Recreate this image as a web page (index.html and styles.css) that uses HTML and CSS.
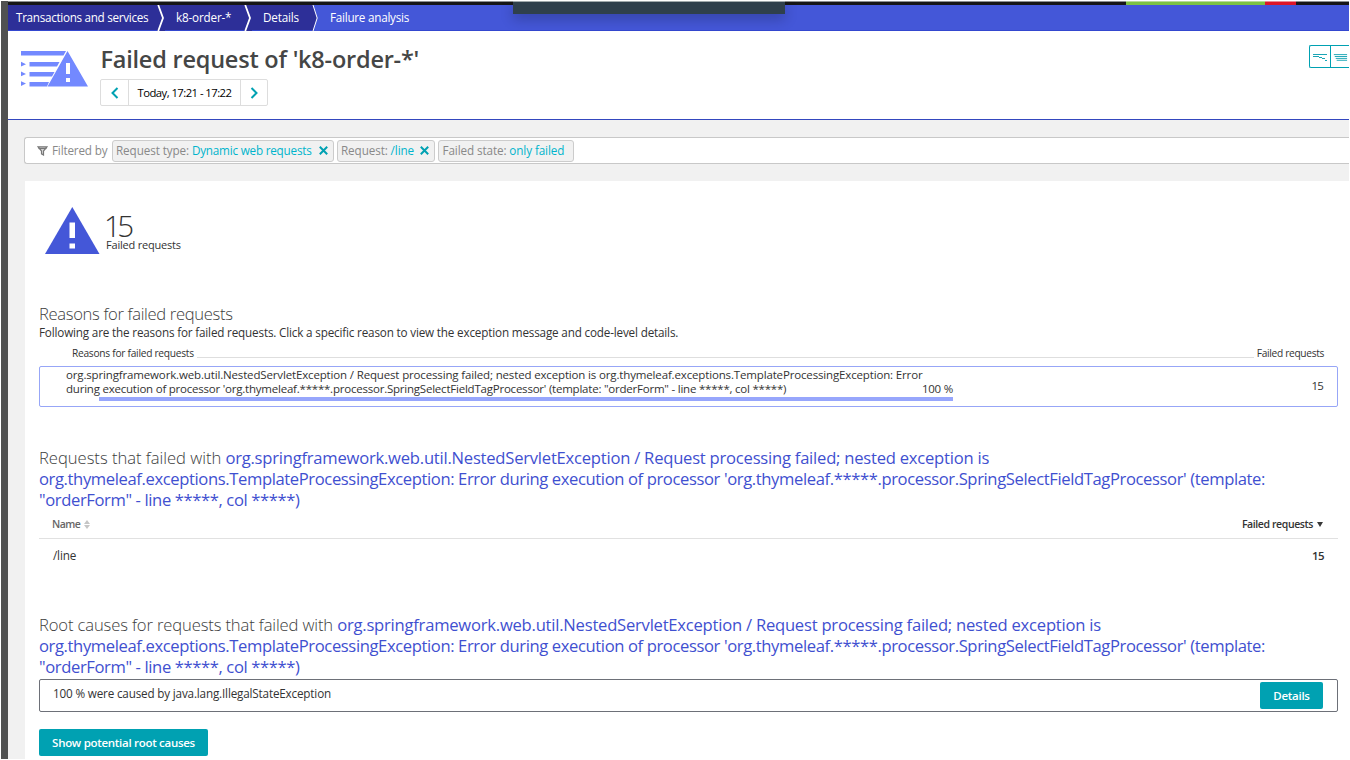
FILE: index.html
```html
<!DOCTYPE html>
<html lang="en">
<head>
<meta charset="utf-8">
<title>Failure analysis</title>
<link rel="stylesheet" href="styles.css">
</head>
<body>
<div class="window">
  <div class="topbar"><i class="dark-a"></i><i class="green"></i><i class="red"></i><i class="dark-b"></i></div>
  <div class="overlay"></div>

  <nav class="crumbs">
    <span class="crumb c1">Transactions and services</span>
    <svg class="sep" viewBox="0 0 8 26"><path d="M1.200 0L6 13L1.200 26"/></svg>
    <span class="crumb c2">k8-order-*</span>
    <svg class="sep" viewBox="0 0 8 26"><path d="M1.200 0L6 13L1.200 26"/></svg>
    <span class="crumb c3">Details</span>
    <svg class="sep last" viewBox="0 0 8 26"><path class="next" d="M1 0H8V26H1L5.200 13Z"/><path d="M1 0L5.200 13L1 26"/></svg>
    <span class="crumb c4">Failure analysis</span>
  </nav>

  <header class="header">
    <svg class="page-icon" width="68" height="38" viewBox="0 0 68 38">
      <path d="M0 1H45L42.500 5.500H0ZM8.500 12H38.500L36 16.500H8.500ZM8.500 22H33.500L31 26.500H8.500ZM8.500 32H28L26 36.500H8.500ZM0 11.800L5 14.200L0 16.600ZM0 21.500L5 23.900L0 26.300ZM0 31.200L5 33.600L0 36ZM46.500 1L67 36.500H26.500Z"/>
      <path class="mark" d="M45 13H49V24H45ZM45 28H49V32H45Z"/>
    </svg>
    <div class="heading">
      <h1>Failed request of 'k8-order-*'</h1>
      <div class="timeframe">
        <button class="step"><svg width="8" height="12" viewBox="0 0 8 12"><path d="M6.500 1L1.500 6L6.500 11"/></svg></button>
        <span class="range">Today, 17:21 - 17:22</span>
        <button class="step next-step"><svg width="8" height="12" viewBox="0 0 8 12"><path d="M1.500 1L6.500 6L1.500 11"/></svg></button>
      </div>
    </div>
    <div class="views">
      <svg width="20" height="21" viewBox="0 0 20 21"><path d="M3 8.500H17M3 10.500H9M9 11.500H12M12 12.500H15M15 14.500H17"/></svg>
      <svg width="19" height="21" viewBox="0 0 19 21"><path d="M3 8.500H17M4 10.500H17M5 12.500H17M6 14.500H17"/></svg>
    </div>
  </header>

  <main class="main">
    <div class="filter">
      <svg class="funnel" width="11" height="10" viewBox="0 0 11 10"><path d="M1 .8H10L6.500 5V9L4.500 7.800V5Z"/><path d="M1.500 2.500H9.500"/></svg>
      <span class="filter-label">Filtered by</span>
      <span class="chip type"><span>Request type: <b>Dynamic web requests</b></span><svg width="9" height="9" viewBox="0 0 9 9"><path d="M.8.8L8.200 8.200M8.200.8L.8 8.200"/></svg></span>
      <span class="chip request"><span>Request: <b>/line</b></span><svg width="9" height="9" viewBox="0 0 9 9"><path d="M.8.8L8.200 8.200M8.200.8L.8 8.200"/></svg></span>
      <span class="chip state"><span>Failed state: <b>only failed</b></span></span>
    </div>

    <section class="card">
      <div class="summary">
        <svg width="55" height="48" viewBox="0 0 55 48"><path d="M27.300 0L54.500 47H0Z"/><path class="mark" d="M24.500 15.500H30V31H24.500ZM24.500 36.500H30V41.500H24.500Z"/></svg>
        <div><div class="count">15</div><div class="caption">Failed requests</div></div>
      </div>

      <h2 class="reasons-title">Reasons for failed requests</h2>
      <p class="intro">Following are the reasons for failed requests. Click a specific reason to view the exception message and code-level details.</p>
      <div class="legend"><span class="legend-name">Reasons for failed requests</span><i></i><span class="legend-count">Failed requests</span></div>
      <div class="reason">
        <div class="reason-text">
          <div class="line-one">org.springframework.web.util.NestedServletException / Request processing failed; nested exception is org.thymeleaf.exceptions.TemplateProcessingException: Error</div>
          <div class="line-two"><span>during execution of processor 'org.thymeleaf.*****.processor.SpringSelectFieldTagProcessor' (template: "orderForm" - line *****, col *****)</span><span class="percent">100 %</span></div>
          <div class="bar"></div>
        </div>
        <span class="reason-count">15</span>
      </div>

      <h2 class="requests-title"><span class="lead-a">Requests that failed with</span> <b><span class="ex-a">org.springframework.web.util.NestedServletException / Request processing failed; nested exception is</span><br><span class="ex-b">org.thymeleaf.exceptions.TemplateProcessingException: Error during execution of processor 'org.thymeleaf.*****.processor.SpringSelectFieldTagProcessor' (template:</span><br><span class="ex-c">"orderForm" - line *****, col *****)</span></b></h2>
      <div class="thead">
        <span class="th-name">Name <svg width="6" height="9" viewBox="0 0 6 9"><path d="M3 0L6 4H0ZM3 9L0 5H6Z"/></svg></span>
        <span class="th-count">Failed requests <svg width="6" height="5" viewBox="0 0 6 5"><path d="M0 0H6L3 5Z"/></svg></span>
      </div>
      <div class="trow"><span>/line</span><strong>15</strong></div>

      <h2 class="causes-title"><span class="lead-b">Root causes for requests that failed with</span> <b><span class="ex-a">org.springframework.web.util.NestedServletException / Request processing failed; nested exception is</span><br><span class="ex-b">org.thymeleaf.exceptions.TemplateProcessingException: Error during execution of processor 'org.thymeleaf.*****.processor.SpringSelectFieldTagProcessor' (template:</span><br><span class="ex-c">"orderForm" - line *****, col *****)</span></b></h2>
      <div class="cause"><span class="cause-text">100 % were caused by java.lang.IllegalStateException</span><button class="btn details">Details</button></div>
      <button class="btn show">Show potential root causes</button>
    </section>
  </main>
</div>
</body>
</html>
```
FILE: styles.css
```css
* { box-sizing: border-box; }
body {
  margin: 0;
  background: #fff;
  color: #333;
  font: 11.700px "Open Sans", "Noto Sans", sans-serif;
  letter-spacing: -.17px;
  white-space: nowrap;
}
h1, h2, p { margin: 0; }
button { margin: 0; padding: 0; border: 0; background: none; font: inherit; }
svg { display: block; flex: none; }

.window {
  position: relative;
  width: 1348px;
  height: 758px;
  margin: 1px;
  border-left: 7px solid #505151;
  overflow: hidden;
}
.topbar { display: flex; height: 4px; margin-left: -7px; border-top: 1px solid #8c8f90; background: #161616; }
.topbar .dark-a { width: 1125px; }
.topbar .green { width: 139px; margin-top: -1px; background: #7cc243; border-top: 1px solid #b7dc95; }
.topbar .red { width: 31px; margin-top: -1px; background: #dd1528; border-top: 1px solid #eb8a91; }
.overlay {
  position: absolute;
  top: 0;
  left: 505px;
  width: 272px;
  height: 13px;
  border-top: 1px solid #a0a9ac;
  background: #2f404c;
  box-shadow: 0 5px 13px rgba(0, 0, 0, .23);
}

.crumbs { display: flex; height: 26px; background: #4457d8; border-bottom: 1px solid #3447cf; color: #fff; font-weight: 500; line-height: 25px; }
.crumb { flex: none; background: #2d2f98; }
.c1 { width: 149px; padding-left: 8px; letter-spacing: -.3px; }
.c2 { width: 79px; padding-left: 11px; }
.c3 { width: 60px; padding-left: 11px; }
.c4 { padding-left: 10px; background: none; letter-spacing: -.25px; }
.sep { width: 8px; height: 26px; background: #2d2f98; fill: none; stroke: #fff; stroke-width: 1.800; }
.sep .next { stroke: none; }
.sep.last { stroke-width: 1; }
.sep.last .next { fill: #4457d8; }

.header { display: flex; height: 89px; border-bottom: 1px solid #3447bf; background: #fff; }
.page-icon { margin: 19px 0 0 13px; fill: #7389ff; }
.mark, .page-icon .mark { fill: #fff; }
.heading { margin: 11px 0 0 11px; }
h1 { padding-left: .5px; color: #454646; font-size: 23.500px; font-weight: 600; line-height: 34px; letter-spacing: -.22px; }
.timeframe { display: flex; width: 168px; height: 27px; margin-top: 3px; border: 1px solid #ddd; border-radius: 2px; color: #000; }
.step { display: flex; width: 27px; align-items: center; justify-content: center; fill: none; stroke: #00a1b2; stroke-width: 2; }
.next-step { width: 26px; }
.range { width: 113px; border: solid #ddd; border-width: 0 1px; font-size: 11.300px; line-height: 25px; text-align: center; letter-spacing: -.55px; }
.views { display: flex; width: 40px; height: 23px; margin: 14px 0 0 auto; border: 1px solid #00a1b2; border-right: 0; border-radius: 2px 0 0 2px; fill: none; stroke: #1aa5b5; stroke-width: 1; }
.views svg + svg { border-left: 1px solid #00a1b2; }

.main { height: 639px; padding: 17px 0 0 16px; background: #f1f1f1; }
.filter { display: flex; align-items: center; height: 27px; padding-left: 12px; border: 1px solid #c8c8c8; border-right: 0; border-radius: 3px 0 0 3px; background: #fff; color: #898989; line-height: 20px; }
.funnel { fill: #ddd; stroke: #777; stroke-width: 1.200; }
.filter-label { width: 59.500px; margin-left: 4px; padding-bottom: 2px; }
.chip { display: flex; flex: none; height: 22px; margin-right: 3px; padding-left: 3.500px; align-items: center; border: 1px solid #ccc; border-radius: 3px; background: #f1f1f1; letter-spacing: -.1px; }
.chip span { padding-bottom: 2px; }
.chip b { color: #00b4cc; font-weight: 400; }
.chip svg { margin-left: auto; stroke: #00a1b2; stroke-width: 2; }
.type { width: 222px; padding-right: 5px; }
.type b { letter-spacing: -.2px; }
.request { width: 98.500px; padding-right: 5px; }
.state { width: 135.500px; }

.card { height: 580px; margin: 17px 0 0 1px; padding: 26px 11px 0 14px; background: #fff; }
.summary { display: flex; height: 96px; padding-left: 6px; fill: #4457d8; }
.summary > div { margin-left: 6px; }
.count { height: 31px; margin-left: -2px; padding-top: 7px; font-size: 29.500px; font-weight: 300; line-height: 24px; letter-spacing: -3.500px; }
.caption { font-size: 11px; line-height: 14px; letter-spacing: -.2px; }
h2 { color: #3c3d3d; font-size: 16.600px; font-weight: 350; line-height: 21px; }
h2 b { color: #3f50d0; font-weight: 400; }
.reasons-title { letter-spacing: -.33px; }
.lead-a { letter-spacing: -.02px; }
.lead-b { letter-spacing: -.13px; }
.ex-a { letter-spacing: -.23px; }
.ex-b, .ex-c { letter-spacing: -.385px; }
.intro { line-height: 17px; }
.legend { display: flex; height: 25px; padding: 4px 14px 0 33px; font-size: 10.200px; line-height: 17px; letter-spacing: -.27px; }
.legend i { flex: 1; height: 1px; margin: 12px 3px 0; background: #dedede; }
.legend-count { letter-spacing: -.33px; }
.reason { display: flex; justify-content: space-between; height: 41px; padding: 1px 14px 0 26px; border: 1px solid #97a6f7; border-radius: 2px; font-size: 11.500px; line-height: 14px; letter-spacing: -.15px; }
.reason-text { width: 887px; }
.line-two { display: flex; justify-content: space-between; letter-spacing: -.22px; }
.bar { height: 4px; margin: 1px 0 0 33px; background: #97a6fc; }
.reason-count { line-height: 36px; letter-spacing: -.800px; }
.requests-title { margin-top: 40px; }
.thead { display: flex; justify-content: space-between; height: 29px; padding: 0 15px 0 13px; border-bottom: 1px solid #e1e1e1; font-size: 10.500px; font-weight: 600; line-height: 29px; letter-spacing: -.4px; }
.thead span { display: flex; align-items: center; gap: 4px; }
.th-name { color: #666; fill: #c5c5c5; letter-spacing: -.5px; }
.th-count { fill: #383838; }
.trow { display: flex; justify-content: space-between; height: 75px; padding: 0 14px; line-height: 33px; }
.trow strong { font-weight: 600; font-size: 11.500px; letter-spacing: -.6px; }
.cause { display: flex; justify-content: space-between; height: 33px; margin-top: 2px; padding: 2px 14px 0 13px; border: 1px solid #6d7078; border-radius: 2px; }
.cause-text { line-height: 23px; }
.btn { display: block; height: 27px; border-radius: 2px; background: #00a1b2; color: #fff; font-size: 11.500px; font-weight: 600; letter-spacing: -.29px; }
.details { width: 63px; }
.show { width: 169px; margin-top: 17px; }
```
